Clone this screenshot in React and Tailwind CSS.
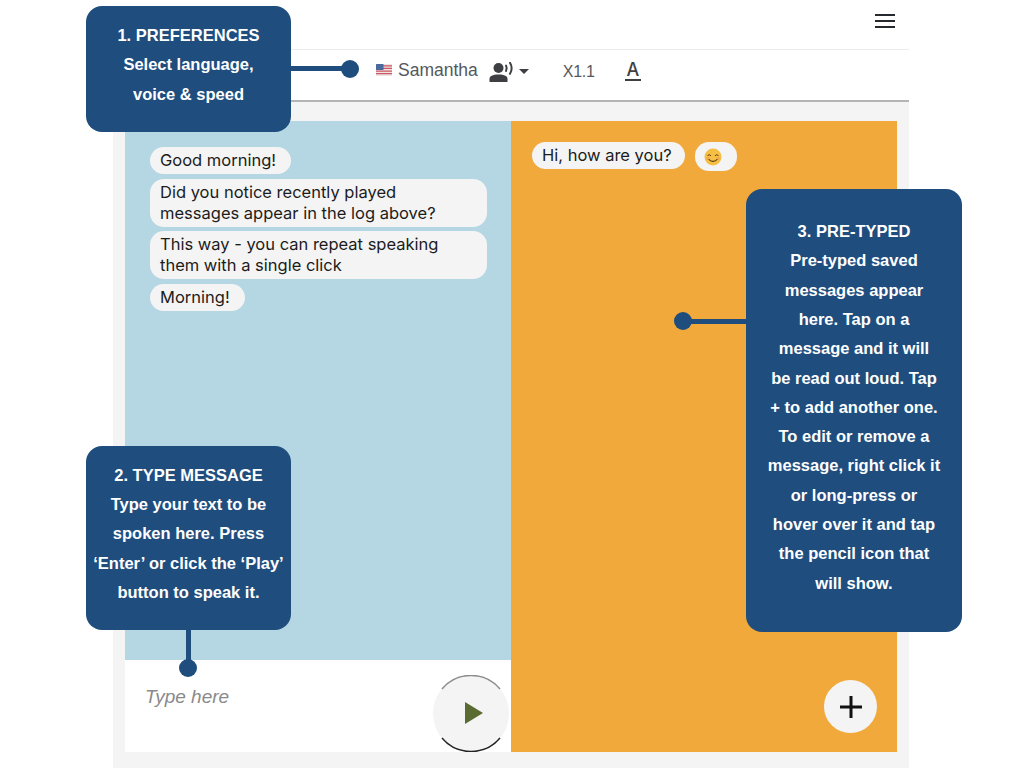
import React from 'react'

function Flag() {
  return (
    <svg width="16" height="12" viewBox="0 0 16 12">
      <rect width="16" height="12" rx="1" fill="#e9e4e6" />
      <path d="M0 1.2h16v1.3H0zM0 3.8h16v1.3H0zM0 6.4h16v1.3H0zM0 9h16v1.3H0z" fill="#d2545f" />
      <rect width="7.5" height="6" rx="0.5" fill="#4a6a9e" />
    </svg>
  )
}

function VoiceIcon() {
  return (
    <svg width="25" height="20" viewBox="0 0 25 20" fill="none">
      <circle cx="9.500" cy="6" r="5" fill="#3d3f42" />
      <path d="M0.500 20v-2.800c0-3.200 3-4.700 9-4.700s9 1.500 9 4.700V20z" fill="#3d3f42" />
      <path d="M17 3.500c1 1.800 1 3.700 0 5.500" stroke="#3d3f42" strokeWidth="2" strokeLinecap="round" />
      <path d="M21 0.800c2 3.300 2 7.600 0 11" stroke="#3d3f42" strokeWidth="2" strokeLinecap="round" />
    </svg>
  )
}

function Smiley() {
  return (
    <svg width="18" height="18" viewBox="0 0 18 18">
      <circle cx="9" cy="9" r="8.500" fill="#f4bf42" />
      <circle cx="3.800" cy="10.500" r="1.700" fill="#f09a5b" opacity="0.600" />
      <circle cx="14.200" cy="10.500" r="1.700" fill="#f09a5b" opacity="0.600" />
      <path d="M3.800 7.600c.6-1.300 2.200-1.300 2.900 0M11.300 7.600c.6-1.300 2.200-1.300 2.900 0" stroke="#5b3a12" strokeWidth="1" fill="none" strokeLinecap="round" />
      <path d="M5 11.500c1.800 2.500 6.200 2.500 8 0" stroke="#5b3a12" strokeWidth="1.100" fill="none" strokeLinecap="round" />
    </svg>
  )
}

function Bubble({ children, wide, tight }) {
  return (
    <div className={`${wide ? 'self-stretch' : 'self-start'} ${tight ? 'pr-[13px]' : 'pr-[15px]'} rounded-[14px] bg-[#f4f4f4] pl-[10px] py-[3px] font-['Inter',sans-serif] text-[16.500px] leading-[21px] text-[#1c1c1c]`}>
      {children}
    </div>
  )
}

const calloutText = "font-['Liberation_Sans',Arial,sans-serif] text-[16.500px] font-bold leading-[29.300px] text-white text-center"

export default function App() {
  return (
    <div className="relative h-[768px] w-full overflow-hidden bg-white">
      <div className="ml-[113px] flex h-[768px] w-[796px] flex-col bg-[#f4f4f4]">
        {/* Navbar */}
        <div className="flex h-[50px] items-center justify-end border-b border-[#ececec] bg-white pr-[14px]">
          <svg width="20" height="14" viewBox="0 0 20 14" className="mb-[7px]">
            <path d="M0 1h20M0 7h20M0 13h20" stroke="#26292d" strokeWidth="2" />
          </svg>
        </div>

        {/* Toolbar */}
        <div className="flex h-[52px] items-center border-b-2 border-[#b4b4b4] bg-white pb-[10px] pl-[263px] font-['Liberation_Sans',Arial,sans-serif] text-[17.500px] text-[#55585c]">
          <Flag />
          <span className="ml-[6px]">Samantha</span>
          <span className="ml-[11px] mt-[4px] flex"><VoiceIcon /></span>
          <span className="ml-[5px] mt-[3px] h-0 w-0 border-x-[5.500px] border-t-[5px] border-x-transparent border-t-[#3d3f42]" />
          <span className="ml-[34px] mt-[3px] text-[16px] tracking-[-0.3px]">X1.1</span>
          <span className="ml-[30px] mt-[2px] border-b-2 border-[#3d3f42] px-[2px] font-['Inter',sans-serif] text-[18px] font-medium leading-[18px] text-[#3d3f42]">A</span>
        </div>

        {/* Panels */}
        <div className="mx-[12px] mb-[16px] mt-[19px] grid flex-1 grid-cols-2">
          <div className="flex flex-col">
            <div className="flex flex-1 flex-col gap-[4.500px] bg-[#b5d6e3] pl-[25px] pr-[24px] pt-[26px]">
              <Bubble>Good morning!</Bubble>
              <Bubble wide>Did you notice recently played<br />messages appear in the log above?</Bubble>
              <Bubble wide>This way - you can repeat speaking<br />them with a single click</Bubble>
              <Bubble>Morning!</Bubble>
            </div>
            <div className="flex h-[92px] items-center justify-between bg-white pl-[20px] pr-[2px]">
              <span className="mb-[18px] font-['Liberation_Sans',Arial,sans-serif] text-[19px] italic text-[#8a8a8a]">Type here</span>
              <button className="relative mt-[14px] flex h-[77px] w-[76px] items-center justify-center rounded-full bg-[#f4f4f4]">
                <svg width="76" height="77" viewBox="0 0 76 77" fill="none" className="absolute inset-0">
                  <path d="M9 13.900a38 38 0 0 1 58 0" stroke="#8c8c8c" strokeWidth="1.500" />
                  <path d="M9 63.100a38 38 0 0 0 58 0" stroke="#222222" strokeWidth="1.500" />
                </svg>
                <svg width="20" height="24" viewBox="0 0 20 24" className="ml-[5px]">
                  <path d="M1 1l18 11L1 23z" fill="#5a6b32" />
                </svg>
              </button>
            </div>
          </div>

          <div className="flex flex-col justify-between bg-[#f2a93b] pb-[19px] pl-[21px] pr-[20px] pt-[21px]">
            <div className="flex items-center gap-[10px]">
              <Bubble tight>Hi, how are you?</Bubble>
              <div className="flex h-[29px] w-[42px] items-center rounded-[14px] bg-[#f4f4f4] pl-[9px]">
                <Smiley />
              </div>
            </div>
            <button className="flex h-[53px] w-[53px] items-center justify-center self-end rounded-full bg-[#f4f4f4]">
              <svg width="24" height="24" viewBox="0 0 24 24">
                <path d="M12 1v22M1 12h22" stroke="#111111" strokeWidth="3" />
              </svg>
            </button>
          </div>
        </div>
      </div>

      {/* Callouts */}
      <div className="absolute left-[86px] top-[6px] flex h-[126px] w-[205px] flex-col justify-center rounded-[16px] bg-[#1e4d7e] pb-[8px]">
        <p className={calloutText}>1. PREFERENCES<br />Select language,<br />voice &amp; speed</p>
      </div>
      <div className="absolute left-[290px] top-[66px] h-[5px] w-[60px] bg-[#1e4d7e]" />
      <div className="absolute left-[341px] top-[60px] h-[18px] w-[18px] rounded-full bg-[#1e4d7e]" />

      <div className="absolute left-[86px] top-[446px] flex h-[184px] w-[205px] flex-col justify-center rounded-[16px] bg-[#1e4d7e] pb-[8px]">
        <p className={calloutText}>2. TYPE MESSAGE<br />Type your text to be<br />spoken here. Press<br />‘Enter’ or click the ‘Play’<br />button to speak it.</p>
      </div>
      <div className="absolute left-[186px] top-[629px] h-[38px] w-[5px] bg-[#1e4d7e]" />
      <div className="absolute left-[179px] top-[659px] h-[18px] w-[18px] rounded-full bg-[#1e4d7e]" />

      <div className="absolute left-[746px] top-[189px] flex h-[443px] w-[216px] flex-col justify-center rounded-[16px] bg-[#1e4d7e] pb-[6px]">
        <p className={calloutText}>3. PRE-TYPED<br />Pre-typed saved<br />messages appear<br />here. Tap on a<br />message and it will<br />be read out loud. Tap<br />+ to add another one.<br />To edit or remove a<br />message, right click it<br />or long-press or<br />hover over it and tap<br />the pencil icon that<br />will show.</p>
      </div>
      <div className="absolute left-[683px] top-[319px] h-[5px] w-[64px] bg-[#1e4d7e]" />
      <div className="absolute left-[674px] top-[312px] h-[18px] w-[18px] rounded-full bg-[#1e4d7e]" />
    </div>
  )
}
